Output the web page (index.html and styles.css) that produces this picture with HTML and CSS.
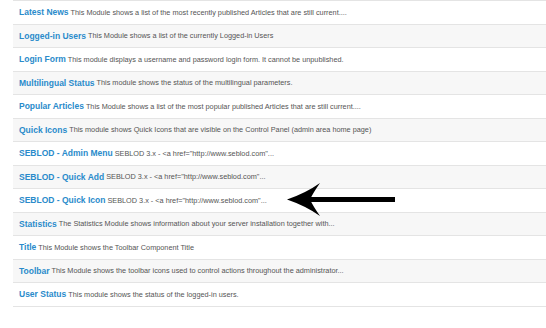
FILE: index.html
```html
<!DOCTYPE html>
<html lang="en">
<head>
    <meta charset="UTF-8">
    <meta name="viewport" content="width=device-width, initial-scale=1.0">
    <title>Administrator Modules</title>
    <link rel="stylesheet" href="styles.css">
</head>
<body>
    <div class="module-list-wrap">
        <ul class="module-list">
            <li class="module-row"><a class="module-name" href="#">Latest News</a> <span class="module-desc">This Module shows a list of the most recently published Articles that are still current....</span></li>
            <li class="module-row"><a class="module-name" href="#">Logged-in Users</a> <span class="module-desc">This Module shows a list of the currently Logged-in Users</span></li>
            <li class="module-row"><a class="module-name" href="#">Login Form</a> <span class="module-desc">This module displays a username and password login form. It cannot be unpublished.</span></li>
            <li class="module-row"><a class="module-name" href="#">Multilingual Status</a> <span class="module-desc">This module shows the status of the multilingual parameters.</span></li>
            <li class="module-row"><a class="module-name" href="#">Popular Articles</a> <span class="module-desc">This Module shows a list of the most popular published Articles that are still current....</span></li>
            <li class="module-row"><a class="module-name" href="#">Quick Icons</a> <span class="module-desc">This module shows Quick Icons that are visible on the Control Panel (admin area home page)</span></li>
            <li class="module-row"><a class="module-name" href="#">SEBLOD - Admin Menu</a> <span class="module-desc">SEBLOD 3.x - &lt;a href="http://www.seblod.com"...</span></li>
            <li class="module-row"><a class="module-name" href="#">SEBLOD - Quick Add</a> <span class="module-desc">SEBLOD 3.x - &lt;a href="http://www.seblod.com"...</span></li>
            <li class="module-row"><a class="module-name" href="#">SEBLOD - Quick Icon</a> <span class="module-desc">SEBLOD 3.x - &lt;a href="http://www.seblod.com"...</span></li>
            <li class="module-row"><a class="module-name" href="#">Statistics</a> <span class="module-desc">The Statistics Module shows information about your server installation together with...</span></li>
            <li class="module-row"><a class="module-name" href="#">Title</a> <span class="module-desc">This Module shows the Toolbar Component Title</span></li>
            <li class="module-row"><a class="module-name" href="#">Toolbar</a> <span class="module-desc">This Module shows the toolbar icons used to control actions throughout the administrator...</span></li>
            <li class="module-row"><a class="module-name" href="#">User Status</a> <span class="module-desc">This module shows the status of the logged-in users.</span></li>
        </ul>

        <!-- Pointer arrow -->
        <svg class="pointer-arrow" viewBox="0 0 112 34" xmlns="http://www.w3.org/2000/svg">
            <rect x="22" y="14" width="87" height="5" fill="#000"/>
            <path d="M 1 16.5 Q 20 10 34 0 Q 27 10 24 16.5 Q 27 23 34 33 Q 20 23 1 16.5 Z" fill="#000"/>
        </svg>
    </div>
</body>
</html>
```

FILE: styles.css
```css
* {
    margin: 0;
    padding: 0;
    box-sizing: border-box;
}

body {
    background: #ffffff;
    font-family: "Liberation Sans", Arial, sans-serif;
    overflow: hidden;
}

.module-list-wrap {
    position: relative;
    padding-left: 13px;
}

.module-list {
    list-style: none;
    border-top: 1px solid #e4e4e4;
}

.module-row {
    height: 23.5px;
    display: flex;
    align-items: center;
    gap: 2px;
    padding-left: 6px;
    border-bottom: 1px solid #e4e4e4;
    white-space: nowrap;
}

.module-row:nth-child(even) {
    background: #f7f7f7;
}

.module-name {
    color: #2a8bcb;
    font-size: 8.5px;
    font-weight: bold;
    text-decoration: none;
}

.module-desc {
    color: #555555;
    font-size: 7.3px;
}

.pointer-arrow {
    position: absolute;
    left: 286px;
    top: 183px;
    width: 112px;
    height: 34px;
}
```
